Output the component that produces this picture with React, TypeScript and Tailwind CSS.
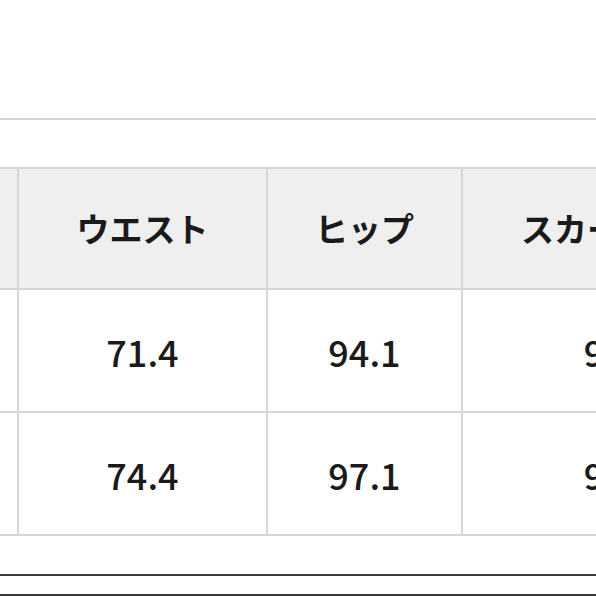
const rows = [
  ['', '71.4', '94.1', '92.4'],
  ['', '74.4', '97.1', '92.4']
]

const headers = ['', 'ウエスト', 'ヒップ', 'スカート総丈']

export default function App() {
  return (
    <div
      className="w-[596px] h-[596px] overflow-hidden bg-white text-[#1a1a1a]"
      style={{ fontFamily: '"Noto Sans CJK JP", "Noto Sans", sans-serif' }}
    >
      <div className="h-[118px]" />
      <div className="border-t-2 border-[#d6d6d6]" />
      <div className="h-[47px]" />
      <table className="table-fixed border-collapse ml-[-83px] w-[860px]">
        <colgroup>
          <col className="w-[100px]" />
          <col className="w-[249px]" />
          <col className="w-[195px]" />
          <col className="w-[316px]" />
        </colgroup>
        <thead>
          <tr className="h-[121px] bg-[#efefef]">
            {headers.map((h, i) => (
              <th
                key={i}
                className="border-2 border-[#d6d6d6] text-center text-[33px] font-bold leading-none whitespace-nowrap"
              >
                {h}
              </th>
            ))}
          </tr>
        </thead>
        <tbody>
          {rows.map((r, ri) => (
            <tr key={ri} className="h-[123px] bg-white">
              {r.map((c, ci) => (
                <td
                  key={ci}
                  className="border-2 border-[#d6d6d6] text-center text-[36px] font-medium leading-none"
                >
                  {c}
                </td>
              ))}
            </tr>
          ))}
        </tbody>
      </table>
      <div className="h-[38px]" />
      <div className="border-t-2 border-[#3a3a3a]" />
      <div className="h-[18px]" />
      <div className="border-t-2 border-[#3a3a3a]" />
    </div>
  )
}
